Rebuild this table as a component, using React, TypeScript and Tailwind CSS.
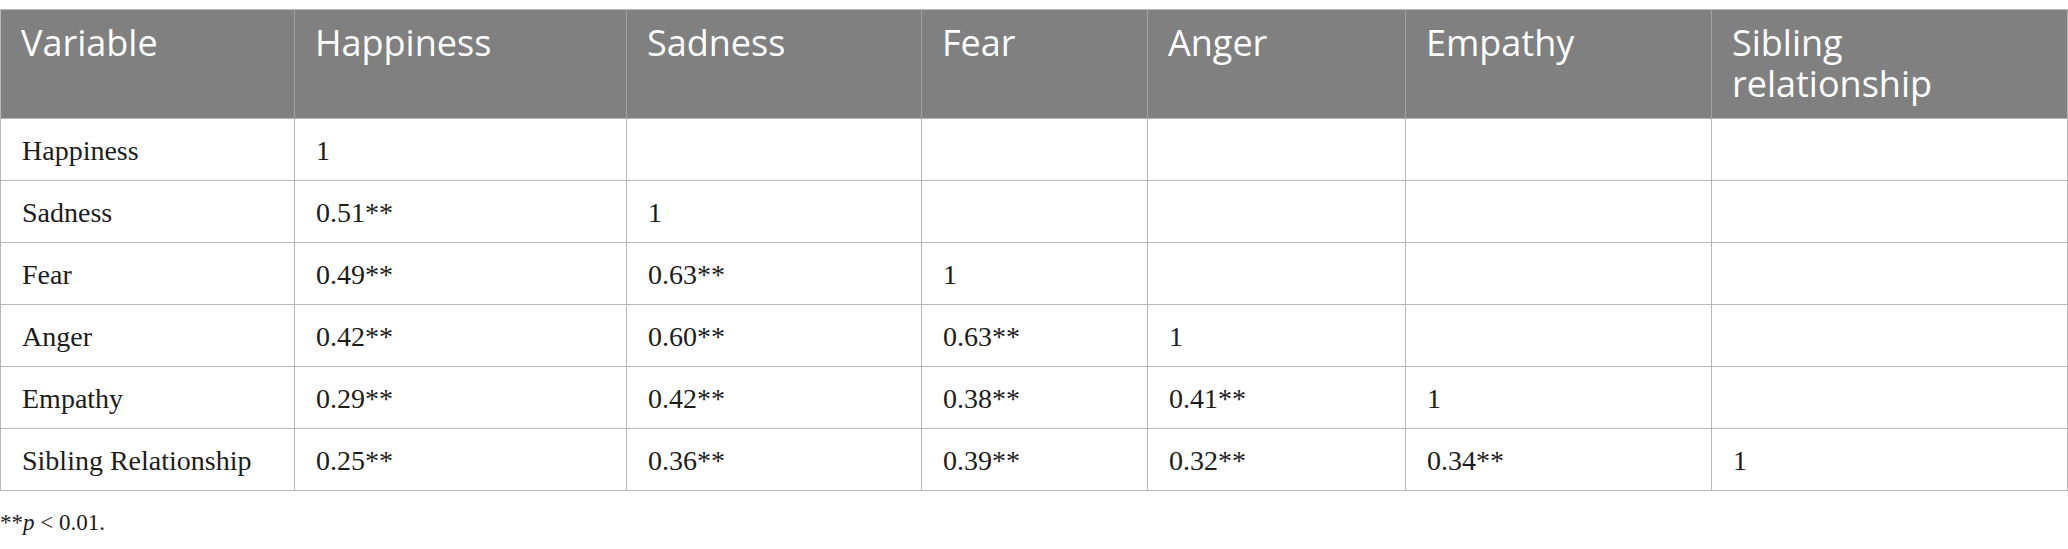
const headers = ['Variable', 'Happiness', 'Sadness', 'Fear', 'Anger', 'Empathy', 'Sibling relationship']

const rows: string[][] = [
  ['Happiness', '1', '', '', '', '', ''],
  ['Sadness', '0.51**', '1', '', '', '', ''],
  ['Fear', '0.49**', '0.63**', '1', '', '', ''],
  ['Anger', '0.42**', '0.60**', '0.63**', '1', '', ''],
  ['Empathy', '0.29**', '0.42**', '0.38**', '0.41**', '1', ''],
  ['Sibling Relationship', '0.25**', '0.36**', '0.39**', '0.32**', '0.34**', '1'],
]

export default function App() {
  return (
    <div className="w-[2068px] h-[549px] bg-white pt-[9px] overflow-hidden">
      <div className="grid grid-cols-[294px_332px_295px_226px_258px_306px_356px] border-t border-l border-[#b8b8b8]">
        {headers.map((h, i) => (
          <div
            key={h}
            className={`h-[109px] bg-[#808080] border-b border-b-[#b8b8b8] px-[20px] pt-[12px] text-white text-[36px] leading-[41px] font-['Open_Sans',sans-serif] ${
              i === headers.length - 1 ? 'border-r border-r-[#b8b8b8]' : 'border-r border-r-[#a2a2a2]'
            }`}
          >
            <span className="block max-w-[240px]">{h}</span>
          </div>
        ))}
        {rows.map((row, r) =>
          row.map((cell, c) => (
            <div
              key={`${r}-${c}`}
              className="h-[62px] border-r border-b border-[#b8b8b8] px-[21px] pt-[16px] text-[28px] leading-[32px] text-[#1c1c1c] font-['Liberation_Serif',serif]"
            >
              {cell}
            </div>
          ))
        )}
      </div>
      <p className="mt-[19px] text-[23px] leading-[26px] text-[#1c1c1c] font-['Liberation_Serif',serif]">
        **<span className="italic">p</span> &lt; 0.01.
      </p>
    </div>
  )
}
